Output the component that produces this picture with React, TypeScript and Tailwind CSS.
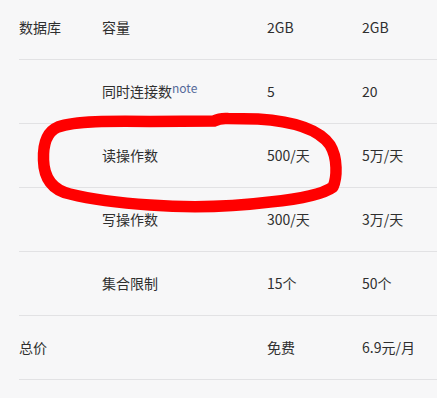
import React from "react";

const rows: { a: string; b: React.ReactNode; c: string; d: string }[] = [
  { a: "数据库", b: "容量", c: "2GB", d: "2GB" },
  {
    a: "",
    b: (
      <span>
        同时连接数
        <sup className="text-[12px] text-[#56699a] relative -top-[4px]">note</sup>
      </span>
    ),
    c: "5",
    d: "20",
  },
  { a: "", b: "读操作数", c: "500/天", d: "5万/天" },
  { a: "", b: "写操作数", c: "300/天", d: "3万/天" },
  { a: "", b: "集合限制", c: "15个", d: "50个" },
  { a: "总价", b: "", c: "免费", d: "6.9元/月" },
];

export default function App() {
  return (
    <div
      className="relative w-[437px] h-[398px] overflow-hidden bg-[#f7f7f8] text-[14px] text-[#2f2f2f]"
      style={{ fontFamily: '"Noto Sans CJK SC", "Noto Sans", sans-serif' }}
    >
      <div className="-mt-1 ml-[19px]">
        {rows.map((r, i) => (
          <div
            key={i}
            className="grid grid-cols-[83px_165px_95px_1fr] h-[64px] items-center border-b border-[#e2e2e4]"
          >
            <div>{r.a}</div>
            <div>{r.b}</div>
            <div>{r.c}</div>
            <div>{r.d}</div>
          </div>
        ))}
      </div>
      <svg
        className="absolute inset-0 pointer-events-none"
        width="437"
        height="398"
        viewBox="0 0 437 398"
      >
        <path
          d="M 58 127 C 75 121, 110 121, 150 121.5 L 214 121 C 218 119, 222 118, 228 118.5 L 258 119 C 290 121, 318 128, 330 145 C 338 158, 337 178, 333 187 C 322 195, 300 199, 270 202 C 230 207, 190 208, 150 205 C 120 203, 90 199, 70 194 C 52 190, 44 178, 43.5 160 C 43 145, 46 132, 58 127 Z"
          fill="none"
          stroke="#ff0000"
          strokeWidth="11.5"
          strokeLinejoin="round"
          strokeLinecap="round"
        />
      </svg>
    </div>
  );
}
